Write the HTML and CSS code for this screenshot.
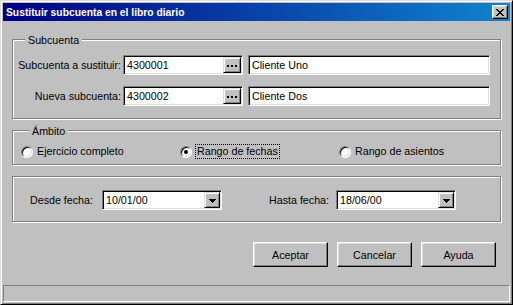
FILE: index.html
```html
<!DOCTYPE html>
<html lang="es">
<head>
  <meta charset="UTF-8" />
  <title>Sustituir subcuenta en el libro diario</title>
  <link rel="stylesheet" href="styles.css">
</head>
<body>

<div class="window">
  <div class="titlebar">
    <span class="title">Sustituir subcuenta en el libro diario</span>
    <span class="close-btn">
      <svg width="8" height="7" viewBox="0 0 8 7"><path d="M0 0h2v1h-2z M6 0h2v1h-2z M1 1h2v1h-2z M5 1h2v1h-2z M2 2h4v1h-4z M3 3h2v1h-2z M2 4h4v1h-4z M1 5h2v1h-2z M5 5h2v1h-2z M0 6h2v1h-2z M6 6h2v1h-2z" fill="#000"/></svg>
    </span>
  </div>

  <div class="client">
    <div class="group group-sub">
      <div class="group-title">Subcuenta</div>
      <div class="sub-grid">
        <label class="row-label">Subcuenta a sustituir:</label>
        <div class="edit edit-code">
          <span class="edit-text">4300001</span>
          <span class="mini-btn"><svg width="10" height="2" viewBox="0 0 10 2"><path d="M0 0h2v2h-2z M4 0h2v2h-2z M8 0h2v2h-2z" fill="#000"/></svg></span>
        </div>
        <div class="edit edit-desc"><span class="edit-text">Cliente Uno</span></div>

        <label class="row-label">Nueva subcuenta:</label>
        <div class="edit edit-code">
          <span class="edit-text">4300002</span>
          <span class="mini-btn"><svg width="10" height="2" viewBox="0 0 10 2"><path d="M0 0h2v2h-2z M4 0h2v2h-2z M8 0h2v2h-2z" fill="#000"/></svg></span>
        </div>
        <div class="edit edit-desc"><span class="edit-text">Cliente Dos</span></div>
      </div>
    </div>

    <div class="group group-scope">
      <div class="group-title">Ámbito</div>
      <div class="radios">
        <div class="radio-item"><span class="radio"></span><span class="radio-text">Ejercicio completo</span></div>
        <div class="radio-item"><span class="radio checked"></span><span class="radio-text focus">Rango de fechas</span></div>
        <div class="radio-item"><span class="radio"></span><span class="radio-text">Rango de asientos</span></div>
      </div>
    </div>

    <div class="group group-dates">
      <div class="date-grid">
        <span class="date-label">Desde fecha:</span>
        <div class="edit combo">
          <span class="edit-text">10/01/00</span>
          <span class="mini-btn drop"><svg width="7" height="4" viewBox="0 0 7 4"><path d="M0 0h7v1h-7z M1 1h5v1h-5z M2 2h3v1h-3z M3 3h1v1h-1z" fill="#000"/></svg></span>
        </div>
        <span></span>
        <span class="date-label">Hasta fecha:</span>
        <div class="edit combo">
          <span class="edit-text">18/06/00</span>
          <span class="mini-btn drop"><svg width="7" height="4" viewBox="0 0 7 4"><path d="M0 0h7v1h-7z M1 1h5v1h-5z M2 2h3v1h-3z M3 3h1v1h-1z" fill="#000"/></svg></span>
        </div>
      </div>
    </div>

    <div class="actions">
      <button class="btn">Aceptar</button>
      <button class="btn">Cancelar</button>
      <button class="btn">Ayuda</button>
    </div>
  </div>

  <div class="statusbar"></div>
</div>

</body>
</html>
```

FILE: styles.css
```css
body {
  margin: 0;
  font-family: "Liberation Sans", Arial, sans-serif;
  font-size: 10.7px;
  color: #000;
  background: #c0c0c0;
}

.window {
  width: 513px;
  height: 305px;
  box-sizing: border-box;
  padding: 2px;
  background: #c0c0c0;
  border: 1px solid;
  border-color: #dfdfdf #000 #000 #dfdfdf;
  box-shadow: inset 1px 1px #fff, inset -1px -1px #808080;
  display: flex;
  flex-direction: column;
  overflow: hidden;
}

.titlebar {
  height: 18px;
  flex: none;
  display: flex;
  align-items: center;
  justify-content: space-between;
  padding: 0 2px 0 3px;
  background: linear-gradient(to right, #000080, #1084d0);
}

.title {
  color: #fff;
  font-weight: bold;
  font-size: 10.3px;
}

.close-btn {
  width: 16px;
  height: 14px;
  box-sizing: border-box;
  display: flex;
  align-items: center;
  justify-content: center;
  background: #c0c0c0;
  border: 1px solid;
  border-color: #fff #000 #000 #fff;
  box-shadow: inset -1px -1px #808080, inset 1px 1px #dfdfdf;
}

.client {
  flex: 1;
  padding: 18px 14px 0 9px;
}

/* group boxes */
.group {
  width: 489px;
  box-sizing: border-box;
  border: 1px solid #808080;
  box-shadow: inset 1px 1px #fff, 1px 1px #fff;
}

.group + .group {
  margin-top: 11px;
}

.group-title {
  display: table;
  height: 13px;
  line-height: 13px;
  margin: -6px 0 0 8px;
  padding: 0 3px;
  background: #c0c0c0;
}

.group-sub {
  padding: 0 0 12px 4px;
}

.sub-grid {
  margin-top: 8px;
  display: grid;
  grid-template-columns: 106px 120px 1fr;
  grid-auto-rows: 20px;
  row-gap: 11px;
  align-items: center;
}

.row-label {
  justify-self: end;
  white-space: nowrap;
  padding-right: 2px;
}

/* sunken edit */
.edit {
  height: 20px;
  box-sizing: border-box;
  background: #fff;
  border: 1px solid;
  border-color: #808080 #fff #fff #808080;
  box-shadow: inset 1px 1px #000, inset -1px -1px #dfdfdf;
  padding: 1px 1px 1px 3px;
  display: flex;
  align-items: center;
  justify-content: space-between;
}

.edit-desc {
  margin: 0 10px 0 5px;
}

.edit-text {
  line-height: 16px;
}

.mini-btn {
  width: 18px;
  height: 16px;
  box-sizing: border-box;
  display: flex;
  align-items: center;
  justify-content: center;
  background: #c0c0c0;
  border: 1px solid;
  border-color: #dfdfdf #000 #000 #dfdfdf;
  box-shadow: inset 1px 1px #fff, inset -1px -1px #808080;
}

.mini-btn svg {
  margin-top: 2px;
}

.mini-btn.drop {
  width: 16px;
}

.mini-btn.drop svg {
  margin-top: 1px;
}

/* radios */
.group-scope {
  padding: 0 0 5px 8px;
}

.radios {
  margin-top: 6px;
  display: grid;
  grid-template-columns: 159px 159px 159px;
}

.radio-item {
  height: 15px;
  display: flex;
  align-items: center;
}

.radio {
  width: 12px;
  height: 12px;
  box-sizing: border-box;
  border-radius: 50%;
  background: #fff;
  border: 1px solid;
  border-color: #808080 #fff #fff #808080;
  box-shadow: inset 1px 1px #000, inset -1px -1px #dfdfdf;
  margin-right: 4px;
  display: flex;
  align-items: center;
  justify-content: center;
}

.radio.checked::after {
  content: "";
  width: 4px;
  height: 4px;
  border-radius: 50%;
  background: #000;
}

.radio-text {
  line-height: 13px;
}

.focus {
  border: 1px dotted #000;
  padding: 0 1px;
  margin-left: -1px;
}

/* dates */
.group-dates {
  height: 46px;
  padding: 13px 0 0 17px;
}

.date-grid {
  display: grid;
  grid-template-columns: 72px 120px 47px 67px 120px;
  align-items: center;
}

.combo {
  padding-left: 3px;
}

/* buttons */
.actions {
  margin-top: 20px;
  display: flex;
  justify-content: flex-end;
  gap: 9px;
}

.btn {
  width: 75px;
  height: 25px;
  box-sizing: border-box;
  font-family: inherit;
  font-size: 10.7px;
  color: #000;
  background: #c0c0c0;
  border: 1px solid;
  border-color: #fff #000 #000 #fff;
  box-shadow: inset -1px -1px #808080, inset 1px 1px #dfdfdf;
  padding: 0;
}

.statusbar {
  height: 17px;
  flex: none;
  box-sizing: border-box;
  border: 1px solid;
  border-color: #808080 #fff #fff #808080;
}
```
